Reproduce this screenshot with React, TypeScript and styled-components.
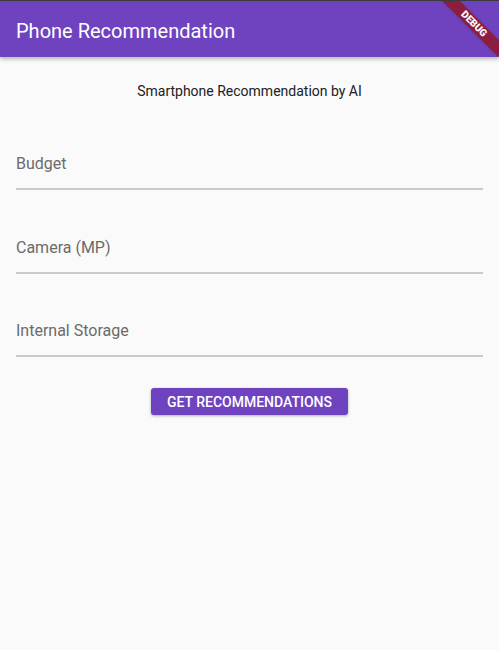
import React from "react";
import styled, { createGlobalStyle } from "styled-components";

const GlobalStyle = createGlobalStyle`
  html, body {
    margin: 0;
    padding: 0;
    background: #fafafa;
    font-family: Roboto, "Noto Sans", "Liberation Sans", sans-serif;
  }
`;

const Screen = styled.div`
  position: relative;
  width: 499px;
  height: 650px;
  overflow: hidden;
  border-top: 1px solid #3c3c3c;
  box-sizing: border-box;
  background: #fafafa;
`;

const AppBar = styled.header`
  height: 56px;
  box-sizing: border-box;
  display: flex;
  align-items: center;
  padding: 4px 16px 0;
  background: #6f43c0;
  box-shadow: 0 2px 4px rgba(0, 0, 0, 0.28);
  position: relative;
  z-index: 1;
`;

const Title = styled.h1`
  margin: 0;
  font-size: 20px;
  font-weight: 400;
  color: #ffffff;
`;

const Body = styled.main`
  display: flex;
  flex-direction: column;
  padding: 24px 16px 16px;
`;

const Subtitle = styled.p`
  margin: 0;
  text-align: center;
  font-size: 14px;
  line-height: 20px;
  color: #212121;
`;

const Field = styled.label<{ $gap: number }>`
  display: block;
  margin-top: ${(p) => p.$gap}px;
  border-bottom: 2px solid #cbcbcb;
`;

const Input = styled.input`
  display: block;
  width: 100%;
  box-sizing: border-box;
  border: none;
  outline: none;
  background: transparent;
  padding: 0 0 12px;
  font-family: inherit;
  font-size: 16px;
  line-height: 24px;
  color: #212121;
  &::placeholder {
    color: #6b6b6b;
  }
`;

const ButtonRow = styled.div`
  display: flex;
  justify-content: center;
  margin-top: 31px;
`;

const Button = styled.button`
  height: 27px;
  padding: 0 16px;
  border: none;
  border-radius: 3px;
  background: #6f43c0;
  color: #ffffff;
  font-family: inherit;
  font-size: 14px;
  font-weight: 500;
  letter-spacing: 0;
  box-shadow: 0 1px 3px rgba(0, 0, 0, 0.3);
  cursor: pointer;
`;

const DebugBanner = styled.div`
  position: absolute;
  left: 434px;
  top: 17px;
  width: 80px;
  height: 12px;
  transform: rotate(45deg);
  background: #8c1d3e;
  color: #ffffff;
  font-size: 10px;
  font-weight: 900;
  line-height: 12px;
  text-align: center;
  z-index: 2;
  box-shadow: 0 0 3px rgba(0, 0, 0, 0.25);
`;

const fields = [
  { label: "Budget", gap: 51 },
  { label: "Camera (MP)", gap: 46 },
  { label: "Internal Storage", gap: 45 },
];

export default function App() {
  return (
    <>
      <GlobalStyle />
      <Screen>
        <AppBar>
          <Title>Phone Recommendation</Title>
        </AppBar>
        <Body>
          <Subtitle>Smartphone Recommendation by AI</Subtitle>
          {fields.map((f) => (
            <Field key={f.label} $gap={f.gap}>
              <Input placeholder={f.label} />
            </Field>
          ))}
          <ButtonRow>
            <Button>GET RECOMMENDATIONS</Button>
          </ButtonRow>
        </Body>
        <DebugBanner>DEBUG</DebugBanner>
      </Screen>
    </>
  );
}
